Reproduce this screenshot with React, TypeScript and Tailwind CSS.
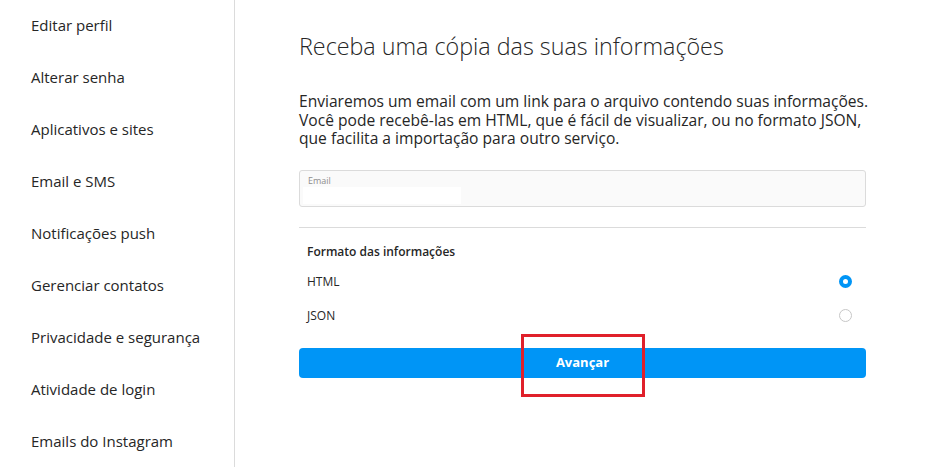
export default function App() {
  const menu = [
    'Editar perfil',
    'Alterar senha',
    'Aplicativos e sites',
    'Email e SMS',
    'Notificações push',
    'Gerenciar contatos',
    'Privacidade e segurança',
    'Atividade de login',
    'Emails do Instagram',
  ];

  return (
    <div className="flex h-[467px] w-[935px] overflow-hidden bg-white text-[#262626] font-['Open_Sans',sans-serif]">
      {/* Sidebar */}
      <div className="w-[235px] shrink-0 border-r border-[#dbdbdb]">
        <ul className="-mt-[1px]">
          {menu.map((item) => (
            <li key={item} className="flex h-[52px] items-center pl-[31px] text-[15px] leading-5">
              {item}
            </li>
          ))}
        </ul>
      </div>

      {/* Main */}
      <div className="pl-[64px] pt-[31px]">
        <div className="w-[567px]">
          <h1 className="whitespace-nowrap text-[23.3px] font-light leading-[30px]">
            Receba uma cópia das suas informações
          </h1>

          <p className="mt-[31px] whitespace-nowrap text-[15.6px] leading-[18.5px]">
            Enviaremos um email com um link para o arquivo contendo suas informações.
            <br />
            Você pode recebê-las em HTML, que é fácil de visualizar, ou no formato JSON,
            <br />
            que facilita a importação para outro serviço.
          </p>

          <div className="relative mt-[22px] h-[37px] rounded-[3px] border border-[#dbdbdb] bg-[#fafafa]">
            <span className="absolute left-[8px] top-[5px] text-[9px] leading-[10px] text-[#8e8e8e]">Email</span>
            <div className="absolute left-[3px] top-[16px] h-[17px] w-[158px] bg-white" />
          </div>

          <div className="mt-[20px] border-t border-[#dbdbdb]" />

          <div className="mt-[16px] px-[8px] text-[12px] font-semibold leading-4">Formato das informações</div>

          <div className="mt-[14px] flex h-4 items-center justify-between pl-[8px] pr-[14px] text-[12px]">
            <span>HTML</span>
            <span className="h-[13px] w-[13px] rounded-full border-[4px] border-[#0095f6] bg-white" />
          </div>
          <div className="mt-[18px] flex h-4 items-center justify-between pl-[8px] pr-[14px] text-[12px]">
            <span>JSON</span>
            <span className="h-[13px] w-[13px] rounded-full border border-[#c7c7c7] bg-white" />
          </div>

          <div className="relative mt-[24px]">
            <button className="flex h-[30px] w-full items-center justify-center rounded-[4px] bg-[#0095f6] text-[13px] font-bold text-white">
              Avançar
            </button>
            <div className="pointer-events-none absolute left-[222px] top-[-14px] h-[63px] w-[124px] border-[3px] border-[#e0202a]" />
          </div>
        </div>
      </div>
    </div>
  );
}
